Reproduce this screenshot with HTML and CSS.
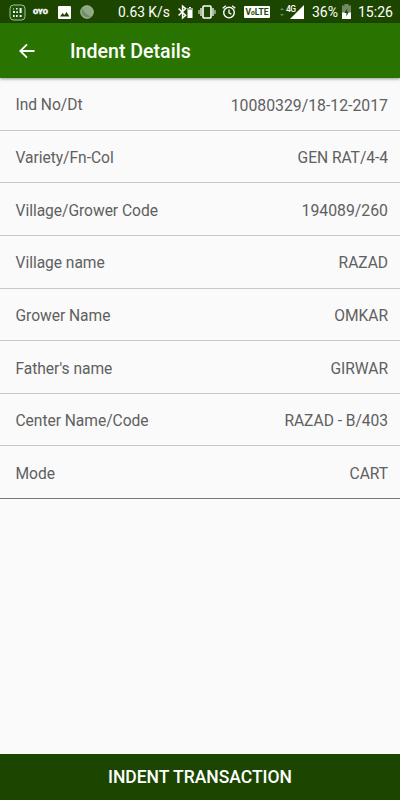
FILE: index.html
```html
<!DOCTYPE html>
<html lang="en">
<head>
    <meta charset="UTF-8">
    <meta name="viewport" content="width=device-width, initial-scale=1.0">
    <title>Indent Details</title>
    <link rel="stylesheet" href="styles.css">
</head>
<body>
    <div class="status-bar">
        <div class="notifications">
            <svg width="17" height="17" viewBox="0 0 17 17">
                <rect x="1" y="1" width="15" height="15" rx="3.5" fill="#1d5008" stroke="#a2c794" stroke-width="1"/>
                <path d="M4 7h2v2H4zM7 4h1.6v1.6H7zM4 4.5h1v1H4zM10.6 4h2v5h-2zM7.3 7.3h1.6v1.6H7.3zM4 11h1.6v2H4zM7 11h1.6v2H7zM10.6 11h2v2h-2z" fill="#fff"/>
            </svg>
            <span class="oyo">OYO</span>
            <svg width="13" height="13" viewBox="0 0 13 13">
                <rect width="13" height="13" rx="1" fill="#fff"/>
                <path d="M2 10.5l2.6-3.4 1.8 2 2.2-3 2.8 4.4z" fill="#1c4600"/>
            </svg>
            <svg width="14" height="14" viewBox="0 0 14 14">
                <circle cx="7" cy="7" r="6.3" fill="#8fa986" stroke="#bdccb5" stroke-width=".8"/>
                <path d="M2.5 3Q4 9.5 11.5 11.5Q6 14 2.5 10Q.5 6.5 2.5 3z" fill="#6f8f64"/>
            </svg>
        </div>

        <div class="system">
            <span class="speed">0.63 K/s</span>
            <svg class="bluetooth" width="15" height="16" viewBox="0 0 15 16">
                <path d="M.6 4.5l7 7L4.6 14V2l3 2.5-7 7" fill="none" stroke="#fff" stroke-width="1.5"/>
                <path d="M9.5 4H11V3h2v1h1.5v10h-5z" fill="#fff"/>
                <path d="M9.5 4h5v2h-5z" fill="#9bb091"/>
            </svg>
            <svg class="vibrate" width="18" height="14" viewBox="0 0 18 14">
                <rect x="5" y="1" width="8" height="12" rx="1" fill="none" stroke="#fff" stroke-width="1.6"/>
                <path d="M3 3v8M15 3v8" stroke="#dce5d8" stroke-width="1.5"/>
                <path d="M1 5v4M17 5v4" stroke="#b2c3aa" stroke-width="1.4"/>
            </svg>
            <svg class="alarm" width="14" height="14" viewBox="0 0 14 14">
                <circle cx="7" cy="7.6" r="5.3" fill="none" stroke="#fff" stroke-width="1.4"/>
                <path d="M.7 3.3L3.8.8M13.3 3.3L10.2.8M7 4.5v3.3l2.4 1.5" fill="none" stroke="#fff" stroke-width="1.3"/>
            </svg>
            <span class="volte">V<i>o</i>LTE</span>
            <svg class="data" width="4" height="10" viewBox="0 0 4 10">
                <path d="M0 3l2-2 2 2zM0 7l2 2 2-2z" fill="#6f8f64"/>
            </svg>
            <span class="net">4G</span>
            <svg class="signal" width="14" height="14" viewBox="0 0 14 14">
                <path d="M14 0v14H0z" fill="#fff"/>
            </svg>
            <span class="percent">36%</span>
            <svg class="battery" width="9" height="15" viewBox="0 0 9 15">
                <path d="M0 1.5h2.5V0h4v1.5H9V9H0z" fill="#708b64"/>
                <path d="M0 8.5h9V15H0z" fill="#fff"/>
                <path d="M5.2 4.5L2.5 9h1.9v3.5L6.7 8H5.2z" fill="#1c4600"/>
            </svg>
            <span class="clock">15:26</span>
        </div>
    </div>

    <header class="app-bar">
        <svg class="back" width="16" height="16" viewBox="0 0 16 16">
            <path d="M15.5 8H1.5M8 1.3L1.3 8 8 14.7" fill="none" stroke="#fff" stroke-width="1.8"/>
        </svg>
        <h1>Indent Details</h1>
    </header>

    <main class="details">
        <div class="row"><span>Ind No/Dt</span><span class="number">10080329/18-12-2017</span></div>
        <div class="row"><span>Variety/Fn-Col</span><span>GEN RAT/4-4</span></div>
        <div class="row"><span>Village/Grower Code</span><span class="number">194089/260</span></div>
        <div class="row"><span>Village name</span><span>RAZAD</span></div>
        <div class="row"><span>Grower Name</span><span>OMKAR</span></div>
        <div class="row"><span>Father's name</span><span>GIRWAR</span></div>
        <div class="row"><span>Center Name/Code</span><span>RAZAD - B/403</span></div>
        <div class="row"><span>Mode</span><span>CART</span></div>
    </main>

    <button class="transaction">INDENT TRANSACTION</button>
</body>
</html>
```
FILE: styles.css
```css
* {
    box-sizing: border-box;
}

body {
    margin: 0;
    height: 800px;
    display: flex;
    flex-direction: column;
    background: #fafafa;
    color: #606060;
    font-family: Roboto, sans-serif;
    overflow: hidden;
}

svg {
    display: block;
    flex: none;
}

.status-bar {
    height: 23px;
    flex: none;
    display: flex;
    justify-content: space-between;
    padding: 1px 8px 0 9px;
    background: #1c4600;
    color: #fff;
    font-size: 14px;
    white-space: nowrap;
}

.notifications,
.system {
    display: flex;
    align-items: center;
}

.notifications {
    gap: 9px;
}

.oyo {
    width: 16px;
    margin-left: -2px;
    font-size: 7.5px;
    font-weight: 900;
    line-height: 10px;
    letter-spacing: 0.1px;
    -webkit-text-stroke: 0.4px #fff;
}

.speed {
    width: 52px;
    font-size: 13.8px;
}

.bluetooth {
    margin-left: 8px;
}

.vibrate {
    margin-left: 5px;
}

.alarm {
    margin-left: 6px;
}

.volte {
    width: 26px;
    height: 12px;
    margin-left: 8px;
    border-radius: 1px;
    background: #fff;
    color: #1c4600;
    font-size: 8.5px;
    font-weight: 700;
    line-height: 12px;
    text-align: center;
}

.volte i {
    font-size: 7px;
}

.data {
    margin-left: 10px;
}

.net {
    width: 9px;
    height: 17px;
    margin-left: 2px;
    font-size: 8.5px;
    font-weight: 500;
    line-height: 10px;
    letter-spacing: -0.5px;
}

.signal {
    margin-left: -5px;
}

.percent {
    width: 26px;
    margin-left: 8px;
}

.battery {
    margin: 0 0 1px 4px;
}

.clock {
    width: 34px;
    margin-left: 7px;
}

.app-bar {
    height: 55px;
    flex: none;
    display: flex;
    align-items: center;
    padding-left: 19px;
    background: #297300;
    box-shadow: 0 1px 3px rgba(0, 0, 0, 0.4);
    color: #fff;
}

.app-bar h1 {
    margin: 0 0 0 35px;
    padding-top: 2px;
    font-size: 19.6px;
    font-weight: 500;
}

.row {
    height: 52.65px;
    display: flex;
    align-items: center;
    justify-content: space-between;
    padding: 3px 12px 0 15.5px;
    border-bottom: 1px solid #c8c8c8;
    font-size: 15.6px;
    letter-spacing: -0.04px;
}

.row:last-child {
    border-bottom-color: #777;
}

.number {
    font-size: 15.8px;
    letter-spacing: 0;
}

.transaction {
    height: 46.5px;
    margin-top: auto;
    padding: 1px 0 0;
    border: 0;
    background: #1c4600;
    color: #fff;
    font-family: inherit;
    font-size: 17.5px;
    font-weight: 500;
}
```
